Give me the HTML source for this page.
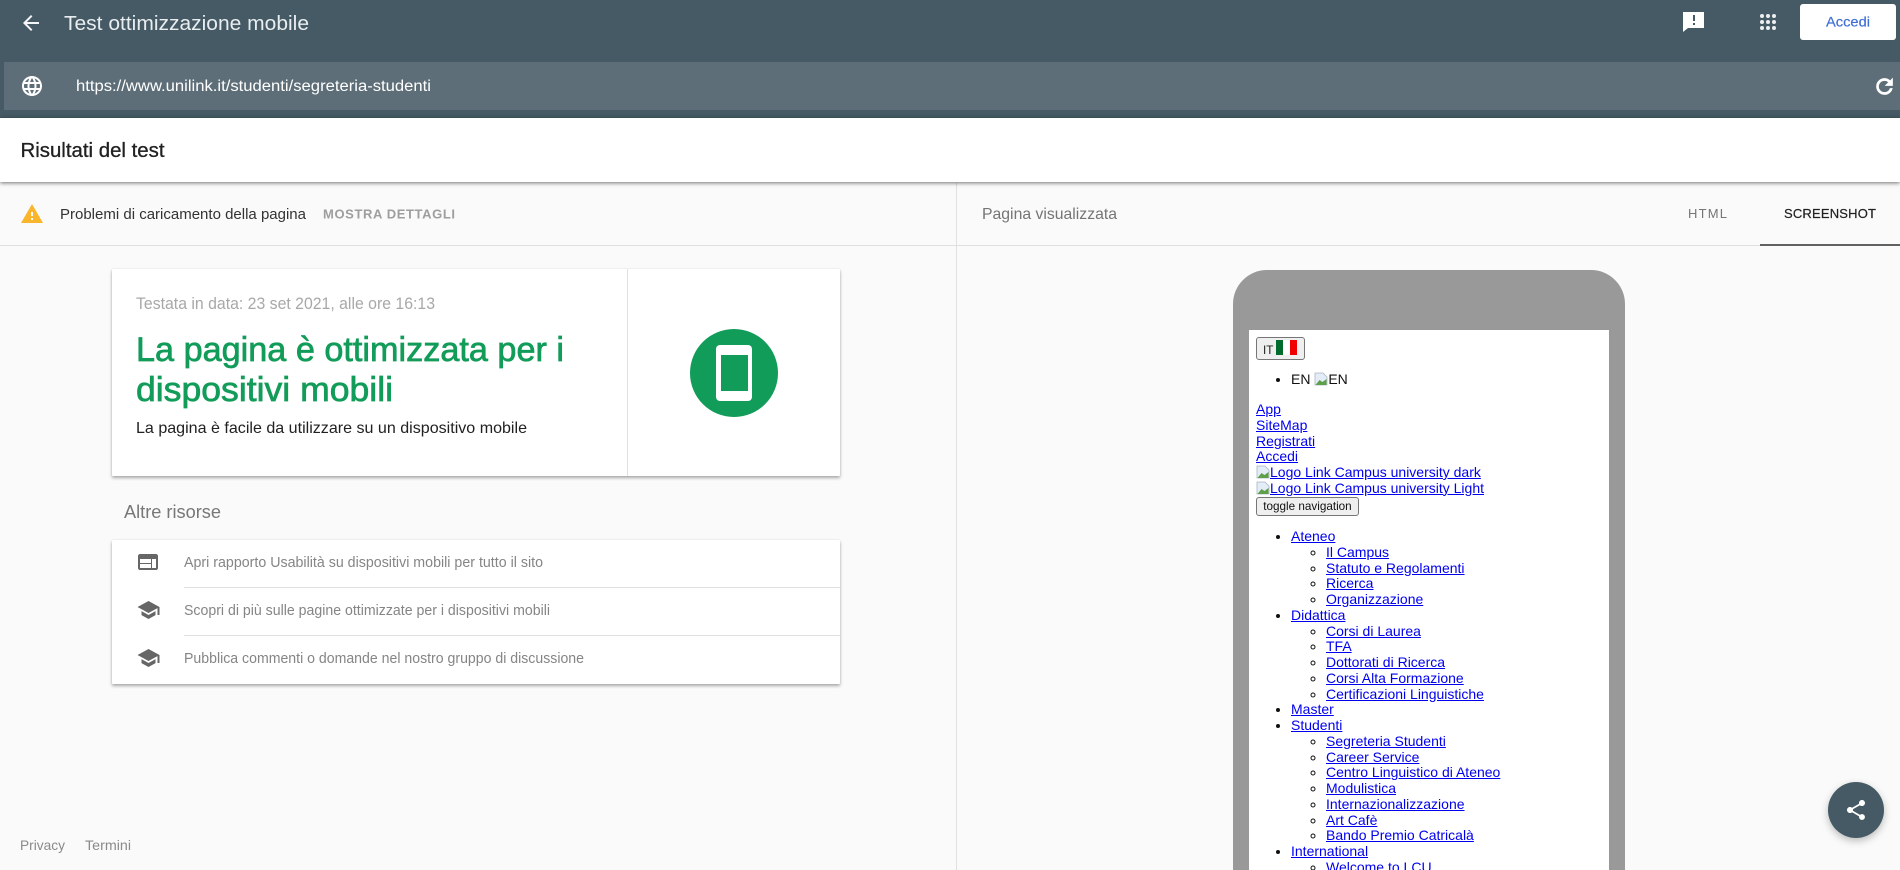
<!DOCTYPE html>
<html lang="it"><head><meta charset="utf-8"><title>Test ottimizzazione mobile</title>
<style>
html,body{margin:0;padding:0;width:1900px;height:870px;overflow:hidden;background:#fafafa;font-family:"Liberation Sans",Arial,sans-serif}
#wrap{position:absolute;left:0;top:0;width:1900px;height:870px;overflow:hidden;background:#fafafa}
.a{position:absolute}
#hdr{left:0;top:0;width:1900px;height:118px;background:#455a64}
#url{left:4px;top:62px;width:1896px;height:48px;background:#5d6e78}
#bar{left:0;top:118px;width:1900px;height:64px;background:#fff;box-shadow:0 1px 4px rgba(0,0,0,.55);z-index:2}
#hl{left:0;top:245px;width:1900px;height:1px;background:#e0e0e0}
#vl{left:956px;top:183px;width:1px;height:687px;background:#e0e0e0}
#tab{left:1760px;top:244px;width:140px;height:2px;background:#616161}
#btn{left:1800px;top:4px;width:96px;height:36px;background:#fff;border-radius:3px}
.card{background:#fff;box-shadow:0 2px 3px rgba(0,0,0,.32),0 0 2px rgba(0,0,0,.07);border-radius:1px}
#c1{left:112px;top:269px;width:728px;height:207px}
#c1v{left:627px;top:269px;width:1px;height:207px;background:#e0e0e0}
#c2{left:112px;top:540px;width:728px;height:144px}
.d{left:184px;width:656px;height:1px;background:#e0e0e0}
#circle{left:690px;top:329px;width:88px;height:88px;border-radius:50%;background:#129c59}
#ph{left:716px;top:345px;width:36px;height:56px;border-radius:4px;background:#fff}
#ph2{left:721px;top:355px;width:27px;height:36px;background:#129c59}
#phone{left:1233px;top:270px;width:392px;height:600px;background:#999;border-radius:34px 34px 0 0}
#screen{left:1249px;top:330px;width:360px;height:540px;background:#fff;overflow:hidden;font-size:14px;line-height:15.75px;color:#111;filter:blur(.3px)}
#screen a{color:#0000ee;text-decoration:underline}
#screen ul{margin:0;padding:0 0 0 35px}
#screen>ul{position:absolute;left:7px;margin:0}
#screen ul ul{list-style:circle}
#itb{left:7px;top:7px;width:47px;height:21px;border:1px solid #767676;border-radius:3px;background:#efefef}
.f{position:absolute;top:2px;height:15px}
#itt{left:6px;top:6px;font-size:11.7px;line-height:13px;color:#222}
#links{left:7px;top:72px;white-space:nowrap}
#tog{left:7px;top:167px;width:101px;height:17px;border:1px solid #767676;border-radius:3px;background:#efefef;font-size:11.7px;line-height:17px;text-align:center;color:#111}
.bi{display:inline-block;width:14px;height:14px;vertical-align:-2px}
#fab{left:1828px;top:782px;width:56px;height:56px;border-radius:50%;background:#455a64;box-shadow:0 3px 8px rgba(0,0,0,.25);z-index:3}
svg.o{position:absolute;left:0;top:0;z-index:4}
</style></head>
<body>
<div id="wrap">
<div class="a" id="hdr"></div><div class="a" id="url"></div><div class="a" id="btn"></div>
<div class="a" id="bar"></div><div class="a" id="hl"></div><div class="a" id="vl"></div><div class="a" id="tab"></div>
<div class="a card" id="c1"></div><div class="a" id="c1v"></div>
<div class="a" id="circle"></div><div class="a" id="ph"></div><div class="a" id="ph2"></div>
<div class="a card" id="c2"></div><div class="a d" style="top:587px"></div><div class="a d" style="top:635px"></div>
<div class="a" id="phone"></div>
<div class="a" id="screen">
  <div class="a" id="itb"><span class="a" id="itt">IT</span><i class="f" style="left:19px;width:7px;background:#006b2d"></i><i class="f" style="left:26px;width:7px;background:#fff"></i><i class="f" style="left:33px;width:7px;background:#f00000"></i></div>
  <ul style="top:42px"><li>EN <svg class="bi" viewBox="0 0 14 14"><path d="M1 1h8l4 4v8H1z" fill="#e4ecf8" stroke="#aab4c4" stroke-width=".8"/><path d="M1.5 13l4-5 3 2 4-3v6z" fill="#5ea04a"/></svg>EN</li></ul>
  <div class="a" id="links"><a>App</a><br><a>SiteMap</a><br><a>Registrati</a><br><a>Accedi</a><br><a><svg class="bi" viewBox="0 0 14 14"><path d="M1 1h8l4 4v8H1z" fill="#e4ecf8" stroke="#aab4c4" stroke-width=".8"/><path d="M1.5 13l4-5 3 2 4-3v6z" fill="#5ea04a"/></svg>Logo Link Campus university dark</a><br><a><svg class="bi" viewBox="0 0 14 14"><path d="M1 1h8l4 4v8H1z" fill="#e4ecf8" stroke="#aab4c4" stroke-width=".8"/><path d="M1.5 13l4-5 3 2 4-3v6z" fill="#5ea04a"/></svg>Logo Link Campus university Light</a></div>
  <div class="a" id="tog">toggle navigation</div>
  <ul style="top:199px">
    <li><a>Ateneo</a><ul><li><a>Il Campus</a></li><li><a>Statuto e Regolamenti</a></li><li><a>Ricerca</a></li><li><a>Organizzazione</a></li></ul></li>
    <li><a>Didattica</a><ul><li><a>Corsi di Laurea</a></li><li><a>TFA</a></li><li><a>Dottorati di Ricerca</a></li><li><a>Corsi Alta Formazione</a></li><li><a>Certificazioni Linguistiche</a></li></ul></li>
    <li><a>Master</a></li>
    <li><a>Studenti</a><ul><li><a>Segreteria Studenti</a></li><li><a>Career Service</a></li><li><a>Centro Linguistico di Ateneo</a></li><li><a>Modulistica</a></li><li><a>Internazionalizzazione</a></li><li><a>Art Cafè</a></li><li><a>Bando Premio Catricalà</a></li></ul></li>
    <li><a>International</a><ul><li><a>Welcome to LCU</a></li></ul></li>
  </ul>
</div>
<div class="a" id="fab"></div>
<svg class="o" width="1900" height="870" viewBox="0 0 1900 870" font-family="'Liberation Sans',Arial,sans-serif">
  <g fill="#fff">
    <path transform="translate(19,11)" d="M20 11H7.83l5.59-5.59L12 4l-8 8 8 8 1.41-1.41L7.83 13H20v-2z" opacity=".95"/>
    <path transform="translate(20,74)" d="M11.99 2C6.47 2 2 6.48 2 12s4.47 10 9.99 10C17.52 22 22 17.52 22 12S17.52 2 11.99 2zm6.93 6h-2.95c-.32-1.25-.78-2.45-1.38-3.56 1.84.63 3.37 1.91 4.33 3.56zM12 4.04c.83 1.2 1.48 2.53 1.91 3.96h-3.82c.43-1.43 1.08-2.76 1.91-3.96zM4.26 14C4.1 13.36 4 12.69 4 12s.1-1.36.26-2h3.38c-.08.66-.14 1.32-.14 2 0 .68.06 1.34.14 2H4.26zm.82 2h2.95c.32 1.25.78 2.45 1.38 3.56-1.84-.63-3.37-1.9-4.33-3.56zm2.95-8H5.08c.96-1.66 2.49-2.93 4.33-3.56C8.81 5.55 8.35 6.75 8.03 8zM12 19.96c-.83-1.2-1.48-2.53-1.91-3.96h3.82c-.43 1.43-1.08 2.76-1.91 3.96zM14.34 14H9.66c-.09-.66-.16-1.32-.16-2 0-.68.07-1.35.16-2h4.68c.09.65.16 1.32.16 2 0 .68-.07 1.34-.16 2zm.25 5.56c.6-1.11 1.06-2.31 1.38-3.56h2.95c-.96 1.65-2.49 2.93-4.33 3.56zM16.36 14c.08-.66.14-1.32.14-2 0-.68-.06-1.34-.14-2h3.38c.16.64.26 1.31.26 2s-.1 1.36-.26 2h-3.38z"/>
    <path fill-rule="evenodd" d="M1683 12h21v16h-16l-5 4zM1693 15v6h2v-6zM1693 23v2h2v-2z"/>
    <g opacity=".9"><circle cx="1762" cy="16" r="2"/><circle cx="1768" cy="16" r="2"/><circle cx="1774" cy="16" r="2"/><circle cx="1762" cy="22" r="2"/><circle cx="1768" cy="22" r="2"/><circle cx="1774" cy="22" r="2"/><circle cx="1762" cy="28" r="2"/><circle cx="1768" cy="28" r="2"/><circle cx="1774" cy="28" r="2"/></g>
    <path transform="translate(1872.5,74.5)" stroke="#fff" stroke-width=".7" d="M17.65 6.35C16.2 4.9 14.21 4 12 4c-4.42 0-7.99 3.58-7.99 8s3.57 8 7.99 8c3.73 0 6.84-2.55 7.73-6h-2.08c-.82 2.33-3.04 4-5.65 4-3.31 0-6-2.69-6-6s2.69-6 6-6c1.66 0 3.14.69 4.22 1.78L13 11h7V4l-2.35 2.35z"/>
    <path transform="translate(1844,798)" d="M18 16.08c-.76 0-1.44.3-1.96.77L8.91 12.7c.05-.23.09-.46.09-.7s-.04-.47-.09-.7l7.05-4.11c.54.5 1.25.81 2.04.81 1.66 0 3-1.34 3-3s-1.34-3-3-3-3 1.34-3 3c0 .24.04.47.09.7L8.04 9.81C7.5 9.31 6.79 9 6 9c-1.66 0-3 1.34-3 3s1.34 3 3 3c.79 0 1.5-.31 2.04-.81l7.12 4.16c-.05.21-.08.43-.08.65 0 1.61 1.31 2.92 2.92 2.92 1.61 0 2.92-1.31 2.92-2.92s-1.31-2.92-2.92-2.92z"/>
  </g>
  <path transform="translate(20,202)" fill="#f9b62c" d="M1 21h22L12 2 1 21zm12-3h-2v-2h2v2zm0-4h-2v-4h2v4z"/>
  <g fill="#666">
    <path transform="translate(136,550)" d="M20 4H4c-1.1 0-1.99.9-1.99 2L2 18c0 1.1.9 2 2 2h16c1.1 0 2-.9 2-2V6c0-1.1-.9-2-2-2zm-5 14H4v-4h11v4zm0-5H4V9h11v4zm5 5h-4V9h4v9z"/>
    <path transform="translate(136.5,598)" d="M5 13.18v4L12 21l7-3.82v-4L12 17l-7-3.82zM12 3L1 9l11 6 9-4.91V17h2V9L12 3z"/>
    <path transform="translate(136.5,646)" d="M5 13.18v4L12 21l7-3.82v-4L12 17l-7-3.82zM12 3L1 9l11 6 9-4.91V17h2V9L12 3z"/>
  </g>
  <g>
    <text x="64" y="30" font-size="20" fill="#e8edf0" textLength="245" lengthAdjust="spacingAndGlyphs">Test ottimizzazione mobile</text>
    <text x="76" y="91" font-size="15.5" fill="#fff" textLength="355" lengthAdjust="spacingAndGlyphs">https://www.unilink.it/studenti/segreteria-studenti</text>
    <text x="1826" y="26.5" font-size="14" fill="#3f6fd6" stroke="#3f6fd6" stroke-width=".2" textLength="44" lengthAdjust="spacingAndGlyphs">Accedi</text>
    <text x="20.5" y="157" font-size="20" fill="#212121" stroke="#212121" stroke-width=".3" textLength="144" lengthAdjust="spacingAndGlyphs">Risultati del test</text>
    <text x="60" y="219" font-size="15" fill="#333" textLength="246" lengthAdjust="spacingAndGlyphs">Problemi di caricamento della pagina</text>
    <text x="323" y="218.5" font-size="13" font-weight="bold" fill="#9e9e9e" textLength="132" lengthAdjust="spacing">MOSTRA DETTAGLI</text>
    <text x="982" y="219" font-size="16" fill="#757575" textLength="135" lengthAdjust="spacingAndGlyphs">Pagina visualizzata</text>
    <text x="1688" y="218" font-size="13" fill="#757575" textLength="39" lengthAdjust="spacing">HTML</text>
    <text x="1784" y="218" font-size="13" fill="#212121" stroke="#212121" stroke-width=".2" textLength="92" lengthAdjust="spacing">SCREENSHOT</text>
    <text x="136" y="309" font-size="16.5" fill="#a8a8a8" textLength="299" lengthAdjust="spacingAndGlyphs">Testata in data: 23 set 2021, alle ore 16:13</text>
    <text x="136" y="361" font-size="34" fill="#129c59" stroke="#129c59" stroke-width=".7" textLength="428" lengthAdjust="spacingAndGlyphs">La pagina è ottimizzata per i</text>
    <text x="136" y="401" font-size="34" fill="#129c59" stroke="#129c59" stroke-width=".7" textLength="257" lengthAdjust="spacingAndGlyphs">dispositivi mobili</text>
    <text x="136" y="433" font-size="16" fill="#212121" textLength="391" lengthAdjust="spacingAndGlyphs">La pagina è facile da utilizzare su un dispositivo mobile</text>
    <text x="124" y="518" font-size="18" fill="#777" textLength="97" lengthAdjust="spacingAndGlyphs">Altre risorse</text>
    <text x="184" y="567" font-size="14.5" fill="#858585" textLength="359" lengthAdjust="spacingAndGlyphs">Apri rapporto Usabilità su dispositivi mobili per tutto il sito</text>
    <text x="184" y="615" font-size="14.5" fill="#858585" textLength="366" lengthAdjust="spacingAndGlyphs">Scopri di più sulle pagine ottimizzate per i dispositivi mobili</text>
    <text x="184" y="663" font-size="14.5" fill="#858585" textLength="400" lengthAdjust="spacingAndGlyphs">Pubblica commenti o domande nel nostro gruppo di discussione</text>
    <text x="20" y="850" font-size="14" fill="#8a8a8a" textLength="45" lengthAdjust="spacingAndGlyphs">Privacy</text>
    <text x="85" y="850" font-size="14" fill="#8a8a8a" textLength="46" lengthAdjust="spacingAndGlyphs">Termini</text>
  </g>
</svg>
</div>
</body></html>
